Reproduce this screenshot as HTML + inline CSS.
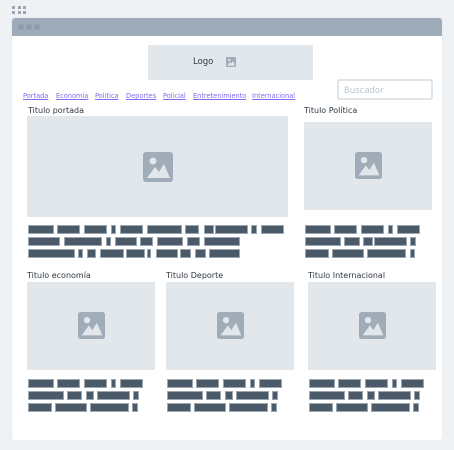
<!DOCTYPE html>
<html><head><meta charset="utf-8"><style>
*{margin:0;padding:0;box-sizing:border-box}
body{width:454px;height:450px;background:#eef2f5;position:relative;overflow:hidden;font-family:"DejaVu Sans","Liberation Sans",sans-serif}
.a{position:absolute}
.g{position:absolute;width:3px;height:3px;background:#9aa6b3}
.win{left:12px;top:18px;width:430px;height:422px;background:#fff;border-radius:3px;box-shadow:0 0 2px rgba(0,0,0,.06)}
.bar{left:12px;top:18px;width:430px;height:18px;background:#9eabb8;border-radius:3px 3px 0 0}
.dot{position:absolute;top:24px;width:6px;height:6px;border-radius:50%;background:#8e9bab}
.img{position:absolute;background:#e2e7eb}
.nav{position:absolute;top:92px;font-size:6.6px;color:#7b6cf2;text-decoration:underline;white-space:nowrap}
.t{position:absolute;font-size:8px;color:#2e3840;white-space:nowrap}
.b{position:absolute;height:9px;background:#4a5a69;border:1px solid #9ba6b1}
.ic{position:absolute}
</style></head><body>
<div class="g" style="left:12px;top:6px"></div><div class="g" style="left:18px;top:6px"></div><div class="g" style="left:23px;top:6px"></div>
<div class="g" style="left:12px;top:11px"></div><div class="g" style="left:18px;top:11px"></div><div class="g" style="left:23px;top:11px"></div>
<div class="a win"></div>
<div class="a bar"></div>
<div class="dot" style="left:18px"></div><div class="dot" style="left:26px"></div><div class="dot" style="left:34px"></div>

<div class="img" style="left:148px;top:45px;width:165px;height:35px"></div>
<div class="t" style="left:193px;top:57px;font-size:8.5px">Logo</div>
<svg class="ic" style="left:226px;top:57px" width="10" height="10" viewBox="0 0 30 30"><rect width="30" height="30" rx="3" fill="#a0acb8"/><circle cx="10" cy="9" r="3.5" fill="#e2e7eb"/><path d="M4 26 L12 15 L16 20 L21 12 L27 26Z" fill="#e2e7eb"/></svg>

<div class="a" style="left:337px;top:79px;width:96px;height:21px;border:2px solid #dfe4e9;border-radius:3px"></div>
<div class="t" style="left:344px;top:86px;font-size:8.5px;color:#b9c3cc">Buscador</div>

<div class="nav" style="left:23px">Portada</div>
<div class="nav" style="left:56px">Economía</div>
<div class="nav" style="left:95px">Política</div>
<div class="nav" style="left:126px">Deportes</div>
<div class="nav" style="left:163px">Policial</div>
<div class="nav" style="left:193px">Entretenimiento</div>
<div class="nav" style="left:252px">Internacional</div>

<div class="t" style="left:28px;top:106px">Titulo portada</div>
<div class="img" style="left:27px;top:116px;width:261px;height:101px"></div>
<svg class="ic" style="left:143px;top:152px" width="30" height="30" viewBox="0 0 30 30"><rect width="30" height="30" rx="3" fill="#a0acb8"/><circle cx="10" cy="9" r="3.5" fill="#e2e7eb"/><path d="M4 26 L12 15 L16 20 L21 12 L27 26Z" fill="#e2e7eb"/></svg>

<div class="t" style="left:304px;top:106px">Titulo Política</div>
<div class="img" style="left:304px;top:122px;width:128px;height:88px"></div>
<svg class="ic" style="left:355px;top:152px" width="27" height="27" viewBox="0 0 30 30"><rect width="30" height="30" rx="3" fill="#a0acb8"/><circle cx="10" cy="9" r="3.5" fill="#e2e7eb"/><path d="M4 26 L12 15 L16 20 L21 12 L27 26Z" fill="#e2e7eb"/></svg>

<div class="b" style="left:28px;top:225px;width:26px"></div>
<div class="b" style="left:57px;top:225px;width:23px"></div>
<div class="b" style="left:84px;top:225px;width:23px"></div>
<div class="b" style="left:111px;top:225px;width:5px"></div>
<div class="b" style="left:120px;top:225px;width:23px"></div>
<div class="b" style="left:147px;top:225px;width:35px"></div>
<div class="b" style="left:185px;top:225px;width:14px"></div>
<div class="b" style="left:204px;top:225px;width:10px"></div>
<div class="b" style="left:215px;top:225px;width:33px"></div>
<div class="b" style="left:251px;top:225px;width:6px"></div>
<div class="b" style="left:261px;top:225px;width:23px"></div>

<div class="b" style="left:28px;top:237px;width:32px"></div>
<div class="b" style="left:64px;top:237px;width:38px"></div>
<div class="b" style="left:106px;top:237px;width:5px"></div>
<div class="b" style="left:115px;top:237px;width:22px"></div>
<div class="b" style="left:140px;top:237px;width:13px"></div>
<div class="b" style="left:157px;top:237px;width:26px"></div>
<div class="b" style="left:187px;top:237px;width:13px"></div>
<div class="b" style="left:204px;top:237px;width:36px"></div>

<div class="b" style="left:28px;top:249px;width:47px"></div>
<div class="b" style="left:78px;top:249px;width:5px"></div>
<div class="b" style="left:87px;top:249px;width:9px"></div>
<div class="b" style="left:100px;top:249px;width:24px"></div>
<div class="b" style="left:126px;top:249px;width:19px"></div>
<div class="b" style="left:147px;top:249px;width:4px"></div>
<div class="b" style="left:156px;top:249px;width:22px"></div>
<div class="b" style="left:180px;top:249px;width:11px"></div>
<div class="b" style="left:195px;top:249px;width:11px"></div>
<div class="b" style="left:209px;top:249px;width:31px"></div>

<div class="b" style="left:305px;top:225px;width:26px"></div>
<div class="b" style="left:334px;top:225px;width:23px"></div>
<div class="b" style="left:361px;top:225px;width:23px"></div>
<div class="b" style="left:388px;top:225px;width:5px"></div>
<div class="b" style="left:397px;top:225px;width:23px"></div>
<div class="b" style="left:305px;top:237px;width:36px"></div>
<div class="b" style="left:344px;top:237px;width:16px"></div>
<div class="b" style="left:363px;top:237px;width:10px"></div>
<div class="b" style="left:374px;top:237px;width:33px"></div>
<div class="b" style="left:410px;top:237px;width:6px"></div>
<div class="b" style="left:305px;top:249px;width:24px"></div>
<div class="b" style="left:332px;top:249px;width:32px"></div>
<div class="b" style="left:367px;top:249px;width:39px"></div>
<div class="b" style="left:410px;top:249px;width:5px"></div>

<div class="t" style="left:27px;top:271px">Titulo economía</div>
<div class="t" style="left:166px;top:271px">Titulo Deporte</div>
<div class="t" style="left:308px;top:271px">Titulo Internacional</div>
<div class="img" style="left:27px;top:282px;width:128px;height:88px"></div>
<div class="img" style="left:166px;top:282px;width:128px;height:88px"></div>
<div class="img" style="left:308px;top:282px;width:128px;height:88px"></div>
<svg class="ic" style="left:78px;top:312px" width="27" height="27" viewBox="0 0 30 30"><rect width="30" height="30" rx="3" fill="#a0acb8"/><circle cx="10" cy="9" r="3.5" fill="#e2e7eb"/><path d="M4 26 L12 15 L16 20 L21 12 L27 26Z" fill="#e2e7eb"/></svg>
<svg class="ic" style="left:217px;top:312px" width="27" height="27" viewBox="0 0 30 30"><rect width="30" height="30" rx="3" fill="#a0acb8"/><circle cx="10" cy="9" r="3.5" fill="#e2e7eb"/><path d="M4 26 L12 15 L16 20 L21 12 L27 26Z" fill="#e2e7eb"/></svg>
<svg class="ic" style="left:359px;top:312px" width="27" height="27" viewBox="0 0 30 30"><rect width="30" height="30" rx="3" fill="#a0acb8"/><circle cx="10" cy="9" r="3.5" fill="#e2e7eb"/><path d="M4 26 L12 15 L16 20 L21 12 L27 26Z" fill="#e2e7eb"/></svg>

<div class="b" style="left:28px;top:379px;width:26px"></div><div class="b" style="left:57px;top:379px;width:23px"></div><div class="b" style="left:84px;top:379px;width:23px"></div><div class="b" style="left:111px;top:379px;width:5px"></div><div class="b" style="left:120px;top:379px;width:23px"></div>
<div class="b" style="left:28px;top:391px;width:36px"></div><div class="b" style="left:67px;top:391px;width:15px"></div><div class="b" style="left:86px;top:391px;width:8px"></div><div class="b" style="left:97px;top:391px;width:33px"></div><div class="b" style="left:133px;top:391px;width:6px"></div>
<div class="b" style="left:28px;top:403px;width:24px"></div><div class="b" style="left:55px;top:403px;width:32px"></div><div class="b" style="left:90px;top:403px;width:39px"></div><div class="b" style="left:132px;top:403px;width:6px"></div>

<div class="b" style="left:167px;top:379px;width:26px"></div><div class="b" style="left:196px;top:379px;width:23px"></div><div class="b" style="left:223px;top:379px;width:23px"></div><div class="b" style="left:250px;top:379px;width:5px"></div><div class="b" style="left:259px;top:379px;width:23px"></div>
<div class="b" style="left:167px;top:391px;width:36px"></div><div class="b" style="left:206px;top:391px;width:15px"></div><div class="b" style="left:225px;top:391px;width:8px"></div><div class="b" style="left:236px;top:391px;width:33px"></div><div class="b" style="left:272px;top:391px;width:6px"></div>
<div class="b" style="left:167px;top:403px;width:24px"></div><div class="b" style="left:194px;top:403px;width:32px"></div><div class="b" style="left:229px;top:403px;width:39px"></div><div class="b" style="left:271px;top:403px;width:6px"></div>

<div class="b" style="left:309px;top:379px;width:26px"></div><div class="b" style="left:338px;top:379px;width:23px"></div><div class="b" style="left:365px;top:379px;width:23px"></div><div class="b" style="left:392px;top:379px;width:5px"></div><div class="b" style="left:401px;top:379px;width:23px"></div>
<div class="b" style="left:309px;top:391px;width:36px"></div><div class="b" style="left:348px;top:391px;width:15px"></div><div class="b" style="left:367px;top:391px;width:8px"></div><div class="b" style="left:378px;top:391px;width:33px"></div><div class="b" style="left:414px;top:391px;width:6px"></div>
<div class="b" style="left:309px;top:403px;width:24px"></div><div class="b" style="left:336px;top:403px;width:32px"></div><div class="b" style="left:371px;top:403px;width:39px"></div><div class="b" style="left:413px;top:403px;width:6px"></div>
</body></html>
